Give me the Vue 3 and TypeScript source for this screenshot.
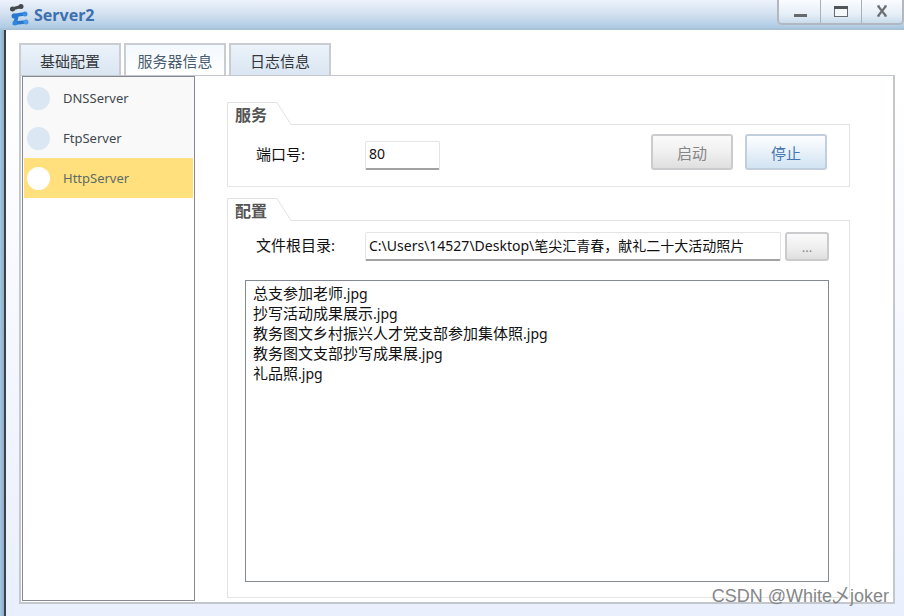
<script setup lang="ts">
import { ref } from 'vue'

const tabs: string[] = ['基础配置', '服务器信息', '日志信息']
const activeTab = ref<string>('服务器信息')

const servers: string[] = ['DNSServer', 'FtpServer', 'HttpServer']
const activeServer = ref<string>('HttpServer')

const port = ref<string>('80')
const rootDir = ref<string>('C:\\Users\\14527\\Desktop\\笔尖汇青春，献礼二十大活动照片')

interface ListedFile {
  name: string
  ext: string
}

const files: ListedFile[] = [
  { name: '总支参加老师', ext: '.jpg' },
  { name: '抄写活动成果展示', ext: '.jpg' },
  { name: '教务图文乡村振兴人才党支部参加集体照', ext: '.jpg' },
  { name: '教务图文支部抄写成果展', ext: '.jpg' },
  { name: '礼品照', ext: '.jpg' },
]
</script>

<template>
  <div class="window">
    <header class="titlebar">
      <svg class="logo" width="20" height="24" viewBox="0 0 20 24" aria-hidden="true">
        <g fill="none" stroke-linecap="round">
          <path d="M3 7L12 4.500" stroke="#45484d" stroke-width="3" />
          <circle cx="3.500" cy="7" r="2.500" fill="#45484d" />
          <circle cx="12" cy="4.500" r="2.500" fill="#45484d" />
          <path d="M5 13.500L15 12M8 14L6 21L17 20" stroke="#2878cf" stroke-width="3.500" />
          <circle cx="5" cy="14" r="2.500" fill="#2878cf" />
          <circle cx="16" cy="12" r="2.500" fill="#3d8ee0" />
          <circle cx="6" cy="21" r="2.500" fill="#2f85e0" />
          <circle cx="17" cy="20" r="2.500" fill="#4a98e6" />
        </g>
      </svg>
      <h1>Server2</h1>
      <div class="controls">
        <button type="button" aria-label="最小化">
          <svg width="14" height="14" viewBox="0 0 14 14"><rect x="1" y="9" width="13" height="3" fill="#66696d" /></svg>
        </button>
        <button type="button" aria-label="最大化">
          <svg width="14" height="14" viewBox="0 0 14 14">
            <rect x="0.5" y="1.500" width="13" height="10" fill="#f5f8fb" stroke="#66696d" />
            <rect x="0" y="1" width="14" height="3" fill="#505357" />
          </svg>
        </button>
        <button type="button" aria-label="关闭">
          <svg width="14" height="14" viewBox="0 0 14 14">
            <path d="M3 1L11 11M11 1L3 11" stroke="#6d7074" stroke-width="2.200" fill="none" />
            <path d="M2 1H5M9 1H12M2 11H5M9 11H12" stroke="#6d7074" stroke-width="1" />
          </svg>
        </button>
      </div>
    </header>

    <main class="client">
      <nav class="tabs">
        <button
          v-for="tab in tabs"
          :key="tab"
          type="button"
          class="tab"
          :class="{ active: tab === activeTab }"
          @click="activeTab = tab"
        >{{ tab }}</button>
      </nav>

      <div class="pane">
        <aside class="servers">
          <button
            v-for="server in servers"
            :key="server"
            type="button"
            class="server"
            :class="{ active: server === activeServer }"
            @click="activeServer = server"
          >
            <span class="dot"></span>{{ server }}
          </button>
        </aside>

        <div class="settings">
          <section class="group">
            <div class="group-head">
              <div class="group-tab">
                <svg width="65" height="23" viewBox="0 0 65 23" aria-hidden="true">
                  <path d="M0.500 23V0.500H50L64 22.500H65" fill="none" stroke="#e2e2e2" />
                </svg>
                <h2>服务</h2>
              </div>
              <div class="group-line"></div>
            </div>
            <div class="group-body service">
              <label for="port">端口号:</label>
              <input id="port" v-model="port" class="port" type="text" />
              <div class="actions">
                <button type="button" class="btn gray">启动</button>
                <button type="button" class="btn blue">停止</button>
              </div>
            </div>
          </section>

          <section class="group grow">
            <div class="group-head">
              <div class="group-tab">
                <svg width="65" height="23" viewBox="0 0 65 23" aria-hidden="true">
                  <path d="M0.500 23V0.500H50L64 22.500H65" fill="none" stroke="#e2e2e2" />
                </svg>
                <h2>配置</h2>
              </div>
              <div class="group-line"></div>
            </div>
            <div class="group-body config">
              <div class="path-row">
                <label for="root">文件根目录:</label>
                <input id="root" v-model="rootDir" class="path" type="text" />
                <button type="button" class="btn gray browse">...</button>
              </div>
              <ul class="files">
                <li v-for="file in files" :key="file.name">{{ file.name }}<span class="ext">{{ file.ext }}</span></li>
              </ul>
            </div>
          </section>
        </div>
      </div>
    </main>
    <div class="watermark">CSDN @White乄joker</div>
  </div>
</template>

<style>
body {
  margin: 0;
}
</style>

<style scoped>
* {
  box-sizing: border-box;
}

.window {
  position: relative;
  display: flex;
  flex-direction: column;
  min-height: 100vh;
  background: linear-gradient(90deg, #a6c6e0, #8aaecb 4px);
  font-family: 'Noto Sans', 'Noto Sans CJK SC', sans-serif;
  font-size: 15px;
  color: #111;
}

button,
input {
  margin: 0;
  font-family: inherit;
  font-size: 15px;
}

.titlebar {
  display: flex;
  align-items: center;
  height: 30px;
  padding-left: 9px;
  background: linear-gradient(#edf2fc, #d3e1f0 50%, #adcae3);
  border-bottom: 2px solid #a9c2d6;
}

.logo {
  flex: none;
}

h1 {
  flex: 1;
  margin: 2px 0 0 5px;
  font-size: 16px;
  line-height: 24px;
  color: #3d70ae;
}

.controls {
  display: flex;
  align-self: flex-start;
  height: 25px;
  border: 2px solid #b3b8be;
  border-top: 0;
  border-radius: 0 0 5px 5px;
  overflow: hidden;
}

.controls button {
  display: flex;
  align-items: center;
  justify-content: center;
  width: 41px;
  padding: 0;
  border: 0;
  background: linear-gradient(#fafcff, #e7eff7 60%, #c9dcec);
}

.controls button + button {
  border-left: 1px solid #a9afb6;
}

.client {
  flex: 1;
  display: flex;
  flex-direction: column;
  margin-left: 4px;
  padding: 13px 9px 12px 13px;
  border-left: 2px solid #3d4247;
  background: linear-gradient(#fff 0, #fff 60px, #e9effd 100%);
}

.tabs {
  display: flex;
  gap: 3px;
}

.tab {
  width: 102px;
  height: 32px;
  padding: 0;
  border: 2px solid #c9cdd1;
  border-bottom: 0;
  background: linear-gradient(#ebf2f9, #dae6f2);
  color: #33373c;
}

.tab.active {
  background: linear-gradient(#f4f9fd, #fff);
  color: #4a5d70;
}

.pane {
  flex: 1;
  display: flex;
  border: 1px solid #c4c8cc;
  border-width: 1px 2px 2px 2px;
  background: #fff;
}

.servers {
  flex: none;
  width: 173px;
  margin: 0 0 1px 1px;
  padding: 1px;
  border: 1px solid #858992;
  background: linear-gradient(#f9f9fa 82px, #fff 82px);
}

.server {
  display: flex;
  align-items: center;
  gap: 13px;
  width: 100%;
  height: 40px;
  padding: 0 3px;
  border: 0;
  background: transparent;
  font-size: 13px;
  color: #40474f;
}

.server.active {
  background: #ffe07d;
  color: #5d6b68;
}

.dot {
  width: 23px;
  height: 23px;
  border-radius: 50%;
  background: #dbe7f2;
}

.server.active .dot {
  background: #fff;
}

.settings {
  flex: 1;
  display: flex;
  flex-direction: column;
  gap: 11px;
  min-width: 0;
  padding: 26px 43px 4px 32px;
}

.group {
  display: flex;
  flex-direction: column;
}

.grow {
  flex: 1;
}

.group-head {
  display: flex;
}

.group-tab {
  display: grid;
}

.group-tab > * {
  grid-area: 1 / 1;
}

h2 {
  margin: 4px 0 0 8px;
  font-size: 16px;
  line-height: 19px;
  color: #555;
}

.group-line {
  flex: 1;
  border-bottom: 1px solid #e2e2e2;
}

.group-body {
  border: 1px solid #e4e4e4;
  border-top: 0;
}

label {
  flex: none;
  width: 109px;
  padding-bottom: 6px;
  line-height: 20px;
}

input {
  height: 29px;
  padding: 0 3px 3px;
  border: 1px solid #e4e4e4;
  border-bottom: 2px solid #a2a2a2;
  border-radius: 2px;
  background: #fff;
  color: #111;
  font-size: 14px;
}

.port {
  width: 75px;
}

.service {
  display: flex;
  align-items: flex-end;
  padding: 9px 22px 16px 28px;
}

.actions {
  display: flex;
  gap: 12px;
  margin-left: auto;
}

.btn {
  width: 82px;
  height: 36px;
  padding: 0;
  border: 2px solid #cbcbcd;
  border-radius: 3px;
}

.gray {
  background: linear-gradient(#fafafa, #f0f0f0 50%, #dfdfdf);
  color: #858585;
}

.blue {
  border-color: #c1cfdc;
  background: linear-gradient(#fdfeff, #e8f1f9 50%, #d2e3f2);
  color: #4377ad;
}

.config {
  flex: 1;
  display: flex;
  flex-direction: column;
  gap: 19px;
  padding: 11px 20px 15px 17px;
}

.path-row {
  display: flex;
  align-items: flex-end;
  padding-left: 11px;
}

.path {
  flex: 1;
  min-width: 0;
}

.browse {
  width: 44px;
  height: 29px;
  margin-left: 4px;
  font-size: 13px;
}

.files {
  flex: 1;
  margin: 0;
  padding: 2px 7px;
  border: 1px solid #858992;
  list-style: none;
  line-height: 20px;
}

.files li {
  height: 20px;
}

.ext {
  font-size: 14px;
}

.watermark {
  position: absolute;
  right: 15px;
  bottom: 8px;
  font-family: 'Liberation Sans', 'Noto Sans CJK SC', sans-serif;
  font-size: 18px;
  line-height: 24px;
  color: #85878a;
  pointer-events: none;
}
</style>
